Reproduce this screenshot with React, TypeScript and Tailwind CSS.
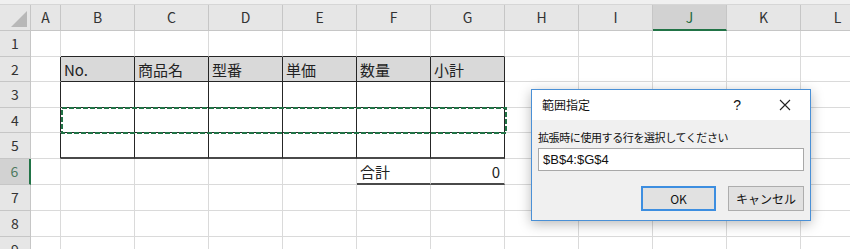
import React from 'react'

const COLS = ['A', 'B', 'C', 'D', 'E', 'F', 'G', 'H', 'I', 'J', 'K', 'L']
const TABLE_COLS = ['B', 'C', 'D', 'E', 'F', 'G']

const ROWS = [
  { n: 1, h: 'h-[26px]' },
  { n: 2, h: 'h-[25px]' },
  { n: 3, h: 'h-[26px]' },
  { n: 4, h: 'h-[25px]' },
  { n: 5, h: 'h-[26px]' },
  { n: 6, h: 'h-[26px]' },
  { n: 7, h: 'h-[26px]' },
  { n: 8, h: 'h-[26px]' },
  { n: 9, h: 'h-[26px]' },
]

const headerLabels: Record<string, string> = {
  B: 'No.',
  C: '商品名',
  D: '型番',
  E: '単価',
  F: '数量',
  G: '小計',
}

function cellClass(row: number, col: string) {
  const inTable = row >= 2 && row <= 5 && TABLE_COLS.includes(col)
  let right = 'border-r border-r-[#dadada]'
  let bottom = 'border-b border-b-[#dadada]'
  let bg = 'bg-white'

  if (inTable) {
    right = 'border-r border-r-[#262626]'
    bottom = row === 5 ? 'border-b-2 border-b-[#4a4a4a]' : 'border-b border-b-[#262626]'
    if (row === 2) bg = 'bg-[#d9d9d9]'
  }
  if (col === 'A' && row >= 2 && row <= 5) right = 'border-r border-r-[#262626]'
  if (row === 1 && TABLE_COLS.includes(col)) bottom = 'border-b border-b-[#262626]'
  if (row === 6 && (col === 'F' || col === 'G')) bottom = 'border-b-2 border-b-[#4a4a4a]'

  const width = col === 'A' ? 'w-[30px]' : 'w-[74px]'
  return `${width} shrink-0 h-full ${right} ${bottom} ${bg} flex items-center px-[3px] overflow-hidden`
}

function cellText(row: number, col: string) {
  if (row === 2 && headerLabels[col]) return headerLabels[col]
  if (row === 6 && col === 'F') return '合計'
  if (row === 6 && col === 'G') return '0'
  return ''
}

function Sheet() {
  return (
    <div className="flex flex-col">
      {/* strip above the column headers */}
      <div className="h-[5px] bg-[#f0f0f0] border-b border-[#d6d6d6]" />

      {/* column headers */}
      <div className="flex h-[26px]">
        <div className="w-[31px] shrink-0 h-full bg-[#e6e6e6] border-r border-b border-[#c6c6c6] relative">
          <svg className="absolute right-[3px] bottom-[3px]" width="16" height="16" viewBox="0 0 16 16">
            <polygon points="16,0 16,16 0,16" fill="#b8b8b8" />
          </svg>
        </div>
        {COLS.map((c) => {
          const selected = c === 'J'
          const width = c === 'A' ? 'w-[30px]' : 'w-[74px]'
          return (
            <div
              key={c}
              className={`${width} shrink-0 h-full flex items-center justify-center text-[14px] ${
                selected
                  ? 'bg-[#d2d2d2] border-r border-r-[#c6c6c6] border-b-2 border-b-[#217346] text-[#1e6b41]'
                  : 'bg-[#e6e6e6] border-r border-b border-[#c6c6c6] text-[#333]'
              }`}
            >
              {c}
            </div>
          )
        })}
      </div>

      {ROWS.map((r) => {
        const selected = r.n === 6
        return (
          <div key={r.n} className={`flex ${r.h}`}>
            <div
              className={`w-[31px] shrink-0 h-full flex items-center justify-center text-[14px] ${
                selected
                  ? 'bg-[#d2d2d2] border-b border-b-[#c6c6c6] border-r-2 border-r-[#217346] text-[#4f7a5f]'
                  : 'bg-[#e6e6e6] border-r border-b border-[#c6c6c6] text-[#333]'
              }`}
            >
              {r.n}
            </div>
            {COLS.map((c) => (
              <div key={c} className={cellClass(r.n, c)}>
                <span
                  className={`text-[15px] leading-none text-[#222] ${
                    r.n === 6 && c === 'G' ? 'ml-auto pr-[1px]' : ''
                  }`}
                >
                  {cellText(r.n, c)}
                </span>
              </div>
            ))}
          </div>
        )
      })}
    </div>
  )
}

function Dialog() {
  return (
    <div className="absolute left-[531px] top-[89px] w-[280px] h-[132px] border border-[#4a90d6] bg-[#f0f0f0] shadow-[0_3px_12px_rgba(0,0,0,0.28)] flex flex-col">
      <div className="h-[30px] shrink-0 bg-white flex items-center pl-[10px] text-[12px] text-[#111]">
        <span>範囲指定</span>
        <span className="ml-auto mr-[38px] text-[14px] font-['Liberation_Sans',sans-serif]">?</span>
        <svg className="mr-[19px]" width="12" height="12" viewBox="0 0 12 12">
          <path d="M1 1 L11 11 M11 1 L1 11" stroke="#222" strokeWidth="1.1" />
        </svg>
      </div>
      <div className="flex-1 flex flex-col px-[6px] pt-[10px]">
        <div className="text-[11px] leading-[14px] tracking-[-0.4px] text-[#111]">
          拡張時に使用する行を選択してください
        </div>
        <div className="mt-[4px] h-[23px] border border-[#a8a8a8] bg-white flex items-center px-[4px] text-[13px] font-['Liberation_Sans','Noto_Sans_CJK_JP',sans-serif] text-[#111]">
          $B$4:$G$4
        </div>
        <div className="mt-[15px] flex justify-end gap-[12px]">
          <button className="w-[75px] h-[25px] bg-[#e1e1e1] border-2 border-[#3d8ee0] text-[12px] text-[#111] flex items-center justify-center">
            OK
          </button>
          <button className="w-[76px] h-[25px] bg-[#e1e1e1] border border-[#adadad] text-[12px] text-[#111] flex items-center justify-center">
            キャンセル
          </button>
        </div>
      </div>
    </div>
  )
}

export default function App() {
  return (
    <div className="relative w-[850px] h-[249px] overflow-hidden bg-white font-['Noto_Sans_CJK_JP',sans-serif]">
      <Sheet />

      {/* copy marquee around B4:G4 */}
      <svg className="absolute left-[61px] top-[107px]" width="446" height="27" viewBox="0 0 446 27">
        <rect
          x="1"
          y="1"
          width="444"
          height="25"
          fill="none"
          stroke="#217346"
          strokeWidth="2"
          strokeDasharray="5 2"
        />
      </svg>

      <Dialog />
    </div>
  )
}
